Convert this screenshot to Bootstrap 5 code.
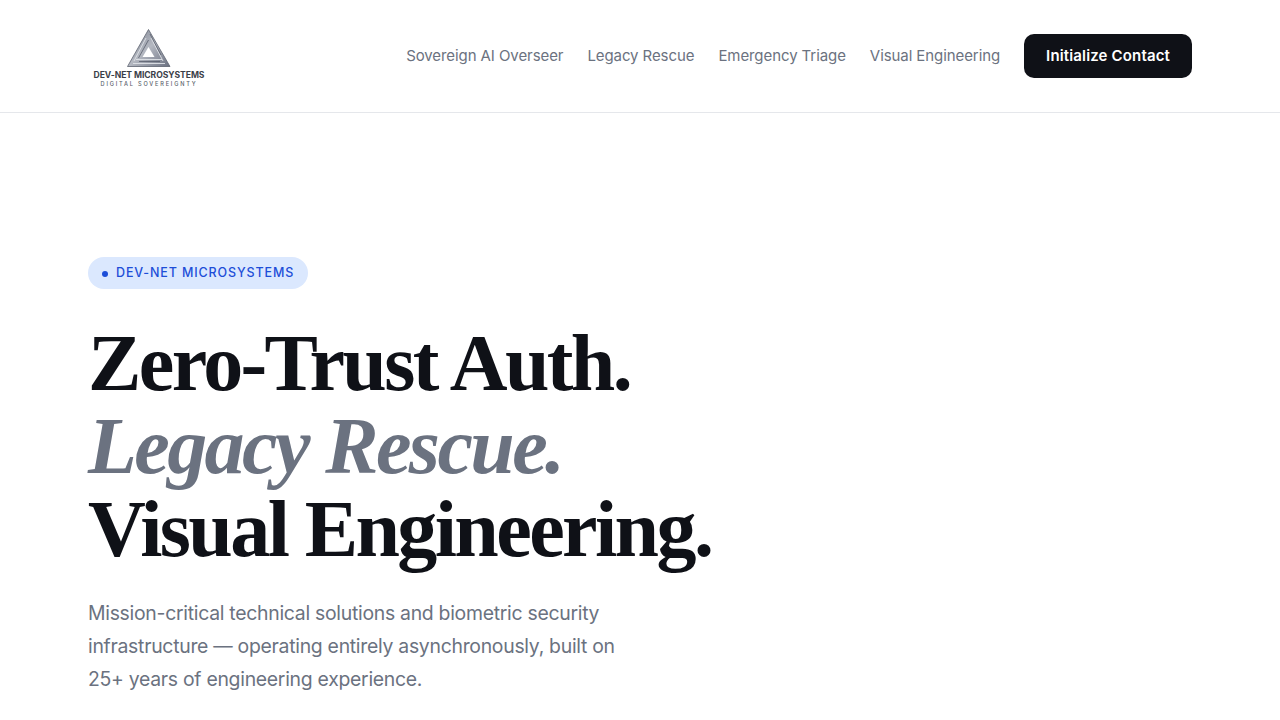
<!DOCTYPE html>
<html lang="en">
<head>
    <meta charset="UTF-8">
    <meta name="viewport" content="width=device-width, initial-scale=1.0">
    <title>Dev-Net Microsystems</title>
    <link href="https://cdn.jsdelivr.net/npm/bootstrap@5.3.0/dist/css/bootstrap.min.css" rel="stylesheet">
    <style>
        body { background: #fff; font-family: "Inter", "Open Sans", sans-serif; color: #0f1117; height: 720px; overflow: hidden; }
        .site-head { height: 113px; padding: 0 88px; border-bottom: 1px solid #e5e7eb; }
        .brand-mark { width: 122px; padding-top: 4px; }
        .brand-name { font-size: 8.6px; font-weight: 700; color: #3a3e48; line-height: 10px; letter-spacing: -.06px; white-space: nowrap; margin-top: 3px; }
        .brand-sub { font-size: 5.6px; font-weight: 500; letter-spacing: 1.8px; color: #5a5f6c; line-height: 8px; white-space: nowrap; }
        .nav-gap { gap: 24px; }
        .top-link { color: #6b7280; font-size: 15px; letter-spacing: -.08px; text-decoration: none; }
        .cta-btn { background: #0f1117; color: #fff; border: 0; border-radius: 10px; font-size: 15px; font-weight: 600; letter-spacing: .15px; padding: 0 22px; height: 44px; line-height: 44px; }
        .hero-wrap { padding: 144px 88px 0; }
        .pill-tag { height: 32px; width: 220px; background: #dbe8fe; color: #1d4ed8; border-radius: 16px; font-size: 12.5px; font-weight: 500; letter-spacing: .87px; padding-left: 14px; padding-top: 1px; gap: 8px; white-space: nowrap; }
        .pill-dot { width: 6px; height: 6px; border-radius: 50%; background: #1d4ed8; }
        .hero-title { font-family: "Liberation Serif", serif; font-weight: 700; font-size: 80px; line-height: 83px; letter-spacing: -2.6px; color: #0f1117; margin: 33px 0 0; white-space: nowrap; }
        .hero-title em { color: #6b7280; display: block; }
        .hero-copy { width: 560px; font-size: 19.4px; line-height: 33px; letter-spacing: -.28px; color: #6b7280; margin: 26px 0 0; }
    </style>
</head>
<body>
    <header class="site-head d-flex align-items-center justify-content-between">
        <div class="brand-mark d-flex flex-column align-items-center">
            <svg width="44" height="38" viewBox="0 0 44 38" aria-hidden="true">
                <defs>
                    <linearGradient id="steel" x1="0" y1="0" x2="1" y2="1">
                        <stop offset="0" stop-color="#7d8390"/>
                        <stop offset=".5" stop-color="#b4b8c1"/>
                        <stop offset="1" stop-color="#6a7080"/>
                    </linearGradient>
                </defs>
                <polygon points="21.5,0.5 43,37.5 0.5,37.5" fill="url(#steel)"/>
                <path d="M21.5 0.5 L43 37.5 H0.5 Z" stroke="#5d6370" stroke-width=".8" fill="none"/>
                <polygon points="21.5,18 27.5,28 15.5,28" fill="#fff"/>
                <path d="M19 9 L7 32 M24 9 L36 32 M9 30.5 H35 M6 34.5 H38" stroke="#dfe2e7" stroke-width=".9" fill="none"/>
                <path d="M21.5 11 L11.5 29 M12 32.5 H33 M23 5 L34 26" stroke="#4d5361" stroke-width=".7" fill="none"/>
            </svg>
            <span class="brand-name">DEV-NET MICROSYSTEMS</span>
            <span class="brand-sub">DIGITAL SOVEREIGNTY</span>
        </div>
        <nav class="d-flex align-items-center nav-gap">
            <a class="top-link" href="#">Sovereign AI Overseer</a>
            <a class="top-link" href="#">Legacy Rescue</a>
            <a class="top-link" href="#">Emergency Triage</a>
            <a class="top-link" href="#">Visual Engineering</a>
            <button class="btn cta-btn" type="button">Initialize Contact</button>
        </nav>
    </header>
    <main class="hero-wrap">
        <div class="pill-tag d-flex align-items-center"><span class="pill-dot"></span>DEV-NET MICROSYSTEMS</div>
        <h1 class="hero-title">Zero-Trust Auth.<em>Legacy Rescue.</em>Visual Engineering.</h1>
        <p class="hero-copy">Mission-critical technical solutions and biometric security infrastructure — operating entirely asynchronously, built on 25+ years of engineering experience.</p>
    </main>
    <script src="https://cdn.jsdelivr.net/npm/bootstrap@5.3.0/dist/js/bootstrap.bundle.min.js"></script>
</body>
</html>
